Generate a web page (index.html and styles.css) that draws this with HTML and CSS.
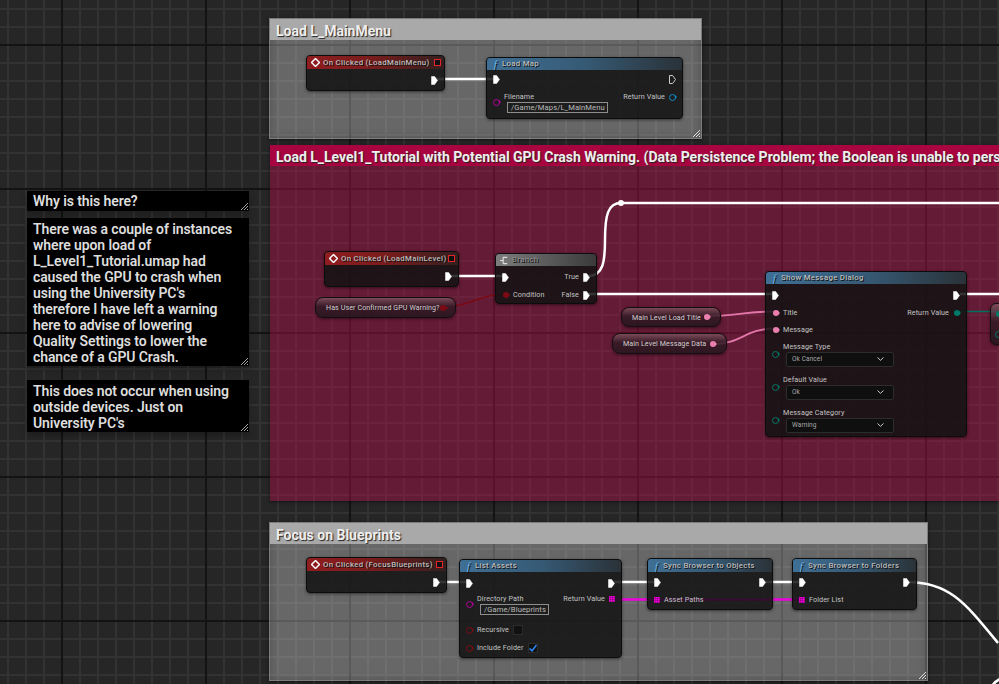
FILE: index.html
```html
<!DOCTYPE html>
<html lang="en">
<head>
  <meta charset="UTF-8" />
  <title>Blueprint Event Graph</title>
  <link rel="stylesheet" href="styles.css">
</head>
<body>
  <svg class="defs" width="0" height="0">
    <symbol id="exec" viewBox="0 0 7 9"><path d="M.5.5H3.600L6.500 4.500 3.600 8.500H.5Z"/></symbol>
    <symbol id="event" viewBox="0 0 10 10"><path d="M5 .6 9.400 5 5 9.400 .6 5Z" fill="none" stroke="#fff" stroke-width="1.600"/></symbol>
    <symbol id="chevron" viewBox="0 0 7 4"><path d="M.5.5 3.500 3.300 6.500.5" fill="none" stroke="#ccc" stroke-width="1"/></symbol>
  </svg>

  <div class="graph">
    <!-- comment boxes -->
    <div class="comment grey c-main-menu"><div class="comment-title">Load L_MainMenu</div><i class="grip"></i></div>
    <div class="comment red c-level1"><div class="comment-title">Load L_Level1_Tutorial with Potential GPU Crash Warning. (Data Persistence Problem; the Boolean is unable to pers</div></div>
    <div class="comment grey c-focus"><div class="comment-title">Focus on Blueprints</div><i class="grip"></i></div>

    <div class="note n-why">Why is this here?<i class="grip"></i></div>
    <div class="note n-reason">There was a couple of instances where upon load of L_Level1_Tutorial.umap had caused the GPU to crash when using the University PC's therefore I have left a warning here to advise of lowering Quality Settings to lower the chance of a GPU Crash.<i class="grip"></i></div>
    <div class="note n-outside">This does not occur when using outside devices. Just on University PC's<i class="grip"></i></div>

    <!-- wires go under the nodes -->
    <svg class="wires" width="999" height="684" viewBox="0 0 999 684">
      <g class="wire-exec">
        <path d="M436 79H494"/>
        <path d="M451 276H504"/>
        <path d="M588 276C603 276 605 262 605 240C605 215 608 203 621 203H1000"/>
        <path d="M588 294H774"/>
        <path d="M960 294H1000"/>
        <path d="M439 582H468"/>
        <path d="M614 582H656"/>
        <path d="M764 582H800"/>
        <path d="M907 582C950 582 966 604 998 643"/>
        <path d="M992 686C994 683 996 681 1000 679"/>
      </g>
      <circle cx="621" cy="203" r="3" fill="#fff"/>
      <path class="wire-bool" d="M442 307C470 307 480 294 505 294"/>
      <path class="wire-text" d="M707 316C735 316 745 311.500 775 311.500"/>
      <path class="wire-text" d="M713 344C742 344 745 328.500 775 328.500"/>
      <path class="wire-enum" d="M955 311.500H1000"/>
      <path class="wire-array" d="M611 599.500H802"/>
    </svg>

    <!-- Load L_MainMenu -->
    <div class="node x-click-menu">
      <div class="head head-event"><svg class="icon"><use href="#event"/></svg>On Clicked (LoadMainMenu)<i class="delegate"></i></div>
      <div class="row row-exec end"><svg class="exec"><use href="#exec"/></svg></div>
    </div>

    <div class="node x-load-map">
      <div class="head head-func"><span class="func">f</span>Load Map</div>
      <div class="row row-exec"><svg class="exec"><use href="#exec"/></svg><svg class="exec hollow"><use href="#exec"/></svg></div>
      <div class="row row-top">
        <div class="side"><i class="pin ring magenta"></i><div class="stack"><span>Filename</span><span class="field f-filename">/Game/Maps/L_MainMenu</span></div></div>
        <div class="side side-out"><span>Return Value</span><i class="pin ring blue"></i></div>
      </div>
    </div>

    <!-- Load L_Level1_Tutorial -->
    <div class="node x-click-level">
      <div class="head head-event"><svg class="icon"><use href="#event"/></svg>On Clicked (LoadMainLevel)<i class="delegate"></i></div>
      <div class="row row-exec end"><svg class="exec"><use href="#exec"/></svg></div>
    </div>

    <div class="var x-has-user"><span>Has User Confirmed GPU Warning?</span><i class="pin solid darkred"></i></div>

    <div class="node x-branch">
      <div class="head head-branch">
        <svg class="icon branch-icon" viewBox="0 0 10 10"><path d="M0 5H3.500M3.500 1.500V8.500M3.500 1.500H8M3.500 8.500H8" fill="none" stroke="#ddd" stroke-width="1.300"/></svg>Branch
      </div>
      <div class="row row-exec">
        <svg class="exec"><use href="#exec"/></svg>
        <div class="side"><span>True</span><svg class="exec"><use href="#exec"/></svg></div>
      </div>
      <div class="row row-pin">
        <div class="side"><i class="pin solid darkred"></i><span>Condition</span></div>
        <div class="side"><span>False</span><svg class="exec"><use href="#exec"/></svg></div>
      </div>
    </div>

    <div class="var x-level-title"><span>Main Level Load Title</span><i class="pin solid pink"></i></div>
    <div class="var x-level-message"><span>Main Level Message Data</span><i class="pin solid pink"></i></div>

    <div class="node x-dialog">
      <div class="head head-func"><span class="func">f</span>Show Message Dialog</div>
      <div class="row row-exec"><svg class="exec"><use href="#exec"/></svg><svg class="exec"><use href="#exec"/></svg></div>
      <div class="row row-pin">
        <div class="side"><i class="pin solid pink"></i><span>Title</span></div>
        <div class="side"><span>Return Value</span><i class="pin solid teal"></i></div>
      </div>
      <div class="row row-pin gap-s">
        <div class="side"><i class="pin solid pink"></i><span>Message</span></div>
      </div>
      <div class="row row-enum first">
        <div class="side"><i class="pin ring teal"></i><div class="stack"><span>Message Type</span><div class="combo">Ok Cancel<svg class="chevron"><use href="#chevron"/></svg></div></div></div>
      </div>
      <div class="row row-enum">
        <div class="side"><i class="pin ring teal"></i><div class="stack"><span>Default Value</span><div class="combo">Ok<svg class="chevron"><use href="#chevron"/></svg></div></div></div>
      </div>
      <div class="row row-enum">
        <div class="side"><i class="pin ring teal"></i><div class="stack"><span>Message Category</span><div class="combo">Warning<svg class="chevron"><use href="#chevron"/></svg></div></div></div>
      </div>
    </div>

    <div class="var x-offscreen"><i class="pin solid teal"></i><i class="pin ring teal"></i></div>

    <!-- Focus on Blueprints -->
    <div class="node x-click-focus">
      <div class="head head-event"><svg class="icon"><use href="#event"/></svg>On Clicked (FocusBlueprints)<i class="delegate"></i></div>
      <div class="row row-exec end"><svg class="exec"><use href="#exec"/></svg></div>
    </div>

    <div class="node x-list-assets">
      <div class="head head-func"><span class="func">f</span>List Assets</div>
      <div class="row row-exec"><svg class="exec"><use href="#exec"/></svg><svg class="exec"><use href="#exec"/></svg></div>
      <div class="row row-top">
        <div class="side"><i class="pin ring magenta"></i><div class="stack"><span>Directory Path</span><span class="field f-directory">/Game/Blueprints</span></div></div>
        <div class="side side-out"><span>Return Value</span><i class="pin array"></i></div>
      </div>
      <div class="row row-check">
        <div class="side"><i class="pin ring darkred"></i><span>Recursive</span><i class="check"></i></div>
      </div>
      <div class="row row-check">
        <div class="side"><i class="pin ring darkred"></i><span>Include Folder</span><i class="check"><svg viewBox="0 0 8 8"><path d="M.5 4.500 3 6.800 7.500 1" fill="none" stroke="#2a8cff" stroke-width="1.500"/></svg></i></div>
      </div>
    </div>

    <div class="node x-sync-objects">
      <div class="head head-func"><span class="func">f</span>Sync Browser to Objects</div>
      <div class="row row-exec"><svg class="exec"><use href="#exec"/></svg><svg class="exec"><use href="#exec"/></svg></div>
      <div class="row row-pin"><div class="side"><i class="pin array"></i><span>Asset Paths</span></div></div>
    </div>

    <div class="node x-sync-folders">
      <div class="head head-func"><span class="func">f</span>Sync Browser to Folders</div>
      <div class="row row-exec"><svg class="exec"><use href="#exec"/></svg><svg class="exec"><use href="#exec"/></svg></div>
      <div class="row row-pin"><div class="side"><i class="pin array"></i><span>Folder List</span></div></div>
    </div>
  </div>
</body>
</html>
```

FILE: styles.css
```css
* {
  box-sizing: border-box;
}
html, body {
  margin: 0;
  background: #262626;
}
.defs {
  position: absolute;
}
.graph {
  position: relative;
  width: 999px;
  height: 684px;
  overflow: hidden;
  font-family: Roboto, "Liberation Sans", sans-serif;
  background-color: #262626;
  background-image:
    linear-gradient(90deg, #131313 2px, transparent 2px),
    linear-gradient(#131313 2px, transparent 2px),
    linear-gradient(90deg, #323232 2px, transparent 2px),
    linear-gradient(#323232 2px, transparent 2px);
  background-size: 144px 100%, 100% 144px, 18px 100%, 100% 18px;
  background-position: 61px 0, 0 44px, 7px 0, 0 8px;
}

/* comment boxes */
.comment {
  position: absolute;
}
.comment.grey {
  background: rgba(255, 255, 255, 0.3);
  border: 1px solid rgba(255, 255, 255, 0.14);
  box-shadow: inset 0 0 8px rgba(0, 0, 0, 0.22), 0 1px 3px rgba(0, 0, 0, 0.5);
}
.comment.red {
  background: rgba(178, 16, 74, 0.45);
  box-shadow: 0 1px 3px rgba(0, 0, 0, 0.5);
}
.comment-title {
  height: 21px;
  padding-left: 6px;
  font-size: 14px;
  font-weight: 700;
  line-height: 24px;
  white-space: nowrap;
  overflow: hidden;
  color: #eee;
  text-shadow: 1px 1px 1px #222;
}
.grey .comment-title {
  background: #a9a9a9;
}
.red .comment-title {
  background: #a8043f;
  letter-spacing: -0.02px;
}
.c-main-menu {
  left: 269px;
  top: 18px;
  width: 433px;
  height: 121px;
}
.c-level1 {
  left: 270px;
  top: 145px;
  width: 729px;
  height: 356px;
}
.c-focus {
  left: 269px;
  top: 522px;
  width: 659px;
  height: 159px;
}
.grip {
  position: absolute;
  right: 1px;
  bottom: 1px;
  width: 8px;
  height: 8px;
  background: repeating-linear-gradient(135deg, #ddd 0 1px, transparent 1px 2px);
  clip-path: polygon(100% 0, 100% 100%, 0 100%);
}

/* black notes on the left */
.note {
  position: absolute;
  left: 27px;
  width: 222px;
  padding: 3px 12px 2px 6px;
  background: #000;
  color: #ddd;
  font-size: 14px;
  font-weight: 600;
  letter-spacing: -0.1px;
  line-height: 16px;
  box-shadow: 0 4px 6px rgba(0, 0, 0, 0.25);
}
.note .grip {
  background: repeating-linear-gradient(135deg, #aaa 0 1px, transparent 1px 2px);
}
.n-why {
  top: 191px;
  height: 20px;
  padding-top: 2px;
}
.n-reason {
  top: 218px;
  height: 148px;
}
.n-outside {
  top: 380px;
  height: 52px;
}

/* wires */
.wires {
  position: absolute;
  left: 0;
  top: 0;
}
.wires path {
  fill: none;
}
.wire-exec path {
  stroke: #fff;
  stroke-width: 2.500;
}
.wires .wire-bool {
  stroke: #7c0a14;
  stroke-width: 1.500;
}
.wires .wire-text {
  stroke: #e276a8;
  stroke-width: 1.800;
}
.wires .wire-enum {
  stroke: #00705f;
  stroke-width: 1.500;
}
.wires .wire-array {
  stroke: #f000e0;
  stroke-width: 2.500;
}

/* nodes */
.node {
  position: absolute;
  background: rgba(18, 18, 18, 0.85);
  border: 1px solid #0c0c0c;
  border-radius: 4px;
  box-shadow: 0 1px 3px rgba(0, 0, 0, 0.5);
  color: #c4c4c4;
  font-size: 7.200px;
  line-height: 10px;
  letter-spacing: 0.1px;
}
.head {
  display: flex;
  align-items: center;
  height: 12px;
  padding-left: 4px;
  border-radius: 3px 3px 0 0;
  font-weight: 500;
  font-size: 7.800px;
  letter-spacing: 0.3px;
  color: #bbb;
  white-space: nowrap;
  text-shadow: 1px 1px 0 #111;
}
.head-event {
  position: relative;
  height: 13px;
  background: linear-gradient(90deg, #8f1d1f, #7a1c1c 45%, #33201f);
}
.head-func {
  height: 12px;
  background: linear-gradient(90deg, #3f6f95, #365a75 50%, #2a3238);
}
.head-branch {
  background: linear-gradient(90deg, #7c7c7c, #555 60%, #3a3a3a);
  color: #888;
}
.icon {
  width: 9px;
  height: 9px;
  margin-right: 3px;
  flex: none;
}
.branch-icon {
  margin-right: 3px;
}
.func {
  width: 9px;
  margin-right: 2px;
  font-family: "Liberation Serif", serif;
  font-style: italic;
  font-size: 11px;
  font-weight: 400;
  color: #6ab4e8;
  text-align: center;
}
.delegate {
  position: absolute;
  right: 3px;
  top: 3px;
  width: 7px;
  height: 7px;
  background: #111;
  border: 1.500px solid #e3242b;
}

.row {
  display: flex;
  justify-content: space-between;
  align-items: center;
  padding: 0 6px;
}
.row-exec {
  height: 22px;
}
.row-exec.end {
  justify-content: flex-end;
}
.row-top {
  align-items: flex-start;
  height: 27px;
}
.row-top > .side:first-child {
  align-items: center;
}
.row-pin {
  height: 14px;
}
.row-pin.gap-s {
  margin-top: 3px;
}
.row-enum {
  height: 26px;
  margin-top: 7px;
  justify-content: flex-start;
}
.row-enum.first {
  margin-top: 4px;
}
.row-check {
  height: 18px;
  justify-content: flex-start;
}
.x-load-map .row-exec {
  height: 19px;
}
.x-load-map .row-top {
  margin-top: 3px;
}
.x-sync-objects .head,
.x-sync-folders .head {
  height: 13px;
}
.x-sync-objects .row-exec,
.x-sync-folders .row-exec {
  height: 21px;
}
.side {
  display: flex;
  align-items: center;
  gap: 4px;
  white-space: nowrap;
}
.stack {
  display: flex;
  flex-direction: column;
}

.exec {
  width: 7px;
  height: 9px;
  fill: #fff;
  stroke: #fff;
  stroke-width: 0.500;
  flex: none;
}
.exec.hollow {
  fill: none;
  stroke: #ccc;
  stroke-width: 1;
}
.pin {
  position: relative;
  display: block;
  width: 7px;
  height: 7px;
  border-radius: 50%;
  flex: none;
}
.pin.solid {
  width: 6px;
  height: 6px;
  margin: 0.500px;
  background: currentColor;
}
.pin.ring {
  border: 1.500px solid currentColor;
}
.pin::after {
  content: "";
  position: absolute;
  left: 5.500px;
  top: 1px;
  border-left: 2px solid currentColor;
  border-top: 2px solid transparent;
  border-bottom: 2px solid transparent;
}
.pin.ring::after {
  left: 5px;
  top: 0;
}
.pin.magenta { color: #b4009c; }
.pin.blue { color: #0a8ccc; }
.pin.teal { color: #007a68; }
.pin.pink { color: #ea7fae; }
.pin.darkred { color: #7c0a14; }
.pin.array {
  width: 6px;
  height: 6px;
  border-radius: 0;
  background:
    repeating-linear-gradient(90deg, transparent 0 1px, rgba(0, 0, 0, 0.2) 1px 2px),
    repeating-linear-gradient(transparent 0 1px, rgba(0, 0, 0, 0.2) 1px 2px),
    #f000d8;
}
.pin.array::after {
  display: none;
}
.field {
  height: 11px;
  margin-left: 3px;
  padding: 0 3px;
  border: 1px solid #8e8e8e;
  font-size: 7.600px;
  line-height: 9px;
  color: #bbb;
  white-space: nowrap;
}
.f-filename { width: 101px; }
.f-directory { width: 69px; }
.combo {
  display: flex;
  justify-content: space-between;
  align-items: center;
  width: 108px;
  height: 15px;
  margin-left: 3px;
  padding: 0 9px 0 5px;
  background: #0f0f0f;
  border: 1px solid #2c2c2c;
  border-radius: 2px;
  font-size: 6.500px;
  color: #aaa;
}
.chevron {
  width: 7px;
  height: 4px;
}
.check {
  display: block;
  width: 10px;
  height: 10px;
  padding: 0;
  background: #111;
  border: 1px solid #2c2c2c;
}
.check svg {
  display: block;
  width: 8px;
  height: 8px;
}

/* variable getters */
.var {
  position: absolute;
  display: flex;
  justify-content: space-between;
  align-items: center;
  padding: 0 10px;
  background: linear-gradient(rgba(130, 90, 100, 0.75), rgba(50, 26, 36, 0.85) 45%, rgba(34, 22, 28, 0.85));
  border: 1px solid #150d10;
  border-radius: 8px;
  box-shadow: 0 1px 3px rgba(0, 0, 0, 0.5);
  color: #d0d0d0;
  font-size: 7.100px;
  letter-spacing: 0.1px;
  white-space: nowrap;
}

/* where each node sits in the graph */
.x-click-menu { left: 306px; top: 55px; width: 139px; height: 36px; }
.x-load-map { left: 486px; top: 57px; width: 197px; height: 62px; }
.x-click-level { left: 324px; top: 251px; width: 135px; height: 36px; }
.x-has-user { left: 315px; top: 297px; width: 141px; height: 21px; }
.x-branch { left: 495px; top: 253px; width: 102px; height: 51px; }
.x-level-title { left: 621px; top: 307px; width: 100px; height: 20px; }
.x-level-message { left: 612px; top: 333px; width: 115px; height: 21px; }
.x-dialog { left: 765px; top: 271px; width: 202px; height: 166px; }
.x-offscreen { left: 990px; top: 303px; width: 40px; height: 42px; flex-direction: column; padding: 6px 4px; align-items: flex-start; border-radius: 6px; }
.x-click-focus { left: 306px; top: 557px; width: 141px; height: 36px; }
.x-list-assets { left: 459px; top: 559px; width: 163px; height: 99px; }
.x-sync-objects { left: 647px; top: 558px; width: 126px; height: 52px; }
.x-sync-folders { left: 792px; top: 558px; width: 125px; height: 52px; }
```
